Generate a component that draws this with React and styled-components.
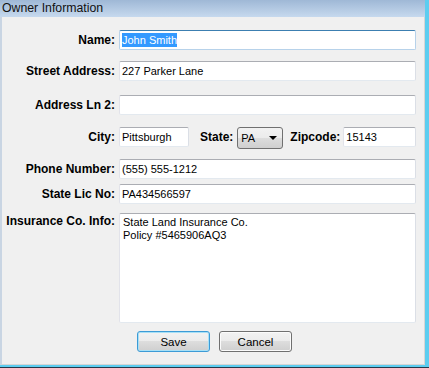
import styled, { createGlobalStyle } from "styled-components";

const GlobalStyle = createGlobalStyle`
  html, body {
    margin: 0;
    padding: 0;
    background: #ffffff;
  }
  body {
    font-family: "Liberation Sans", Arial, sans-serif;
  }
`;

const Window = styled.div`
  width: 429px;
  height: 368px;
  box-sizing: border-box;
  border-bottom: 1px solid #26394a;
  display: flex;
  flex-direction: column;
`;

const Frame = styled.div`
  flex: 1;
  min-height: 0;
  display: flex;
  flex-direction: column;
  border-right: 4px solid #5ccdf0;
  border-bottom: 2px solid #5ccdf0;
`;

const TitleBar = styled.div`
  flex: none;
  height: 17px;
  padding-left: 2px;
  background: linear-gradient(#9fb8d6, #c6d9ee);
  font-size: 12.3px;
  line-height: 17px;
  color: #111111;
`;

const Body = styled.div`
  flex: 1;
  display: flex;
  flex-direction: column;
  background: #f0f0f0;
  border-left: 2px solid #c9d5e3;
  border-right: 1px solid #d6d6d6;
  border-bottom: 1px solid #d6d6d6;
  padding-right: 8px;
`;

const Row = styled.div`
  display: flex;
  align-items: flex-start;
  margin-top: ${(p) => p.$top}px;
`;

const Label = styled.div`
  flex: none;
  width: 117px;
  box-sizing: border-box;
  padding-right: 4px;
  text-align: right;
  font-size: 12px;
  font-weight: bold;
  line-height: ${(p) => (p.$multi ? "13px" : "20px")};
  padding-top: ${(p) => (p.$multi ? "2px" : "0")};
  color: #000000;
`;

const InlineLabel = styled.div`
  flex: none;
  margin-left: ${(p) => p.$left}px;
  margin-right: ${(p) => p.$right}px;
  font-size: 12px;
  font-weight: bold;
  line-height: 20px;
  color: #000000;
`;

const TextBox = styled.div`
  flex: ${(p) => (p.$width ? "none" : "1")};
  width: ${(p) => (p.$width ? `${p.$width}px` : "auto")};
  height: ${(p) => p.$height || 20}px;
  box-sizing: border-box;
  background: #ffffff;
  border: 1px solid;
  border-color: ${(p) =>
    p.$focus
      ? "#3c7fb1 #b7d2ea #b7d2ea #b7d2ea"
      : "#abadb3 #dbdfe6 #e3e9ef #e2e3ea"};
  border-radius: 2px;
  padding: ${(p) => (p.$multi ? "2px 3px" : "0 2px")};
  font-size: 11px;
  line-height: ${(p) => (p.$multi ? "13px" : "18px")};
  color: #000000;
  white-space: pre;
`;

const Selected = styled.span`
  background: #3399ff;
  color: #ffffff;
  padding: 1px 0;
`;

const Select = styled.div`
  flex: none;
  width: 46px;
  height: 22px;
  box-sizing: border-box;
  display: flex;
  align-items: center;
  padding-left: 3px;
  border: 1px solid #707070;
  border-radius: 3px;
  background: linear-gradient(#f2f2f2 0%, #ebebeb 50%, #dddddd 50%, #cfcfcf 100%);
  font-size: 11px;
  color: #000000;
`;

const Arrow = styled.span`
  width: 0;
  height: 0;
  margin-left: auto;
  margin-right: 5px;
  border-left: 4px solid transparent;
  border-right: 4px solid transparent;
  border-top: 4px solid #000000;
`;

const Buttons = styled.div`
  display: flex;
  gap: 9px;
  margin-top: 8px;
  padding-left: 135px;
`;

const Button = styled.div`
  width: 73px;
  height: 21px;
  box-sizing: border-box;
  display: flex;
  align-items: center;
  justify-content: center;
  border: 1px solid ${(p) => (p.$default ? "#3c9bd6" : "#707070")};
  border-radius: 3px;
  box-shadow: ${(p) => (p.$default ? "inset 0 0 0 1px #a8e0f6" : "inset 0 0 0 1px #fbfbfb")};
  background: linear-gradient(#f2f2f2 0%, #ebebeb 50%, #dddddd 50%, #cfcfcf 100%);
  font-size: 11.5px;
  color: #000000;
`;

export default function App() {
  return (
    <>
      <GlobalStyle />
      <Window>
        <Frame>
          <TitleBar>Owner Information</TitleBar>
          <Body>
            <Row $top={13}>
              <Label>Name:</Label>
              <TextBox $focus>
                <Selected>John Smith</Selected>
              </TextBox>
            </Row>
            <Row $top={11}>
              <Label>Street Address:</Label>
              <TextBox>227 Parker Lane</TextBox>
            </Row>
            <Row $top={14}>
              <Label>Address Ln 2:</Label>
              <TextBox />
            </Row>
            <Row $top={12}>
              <Label>City:</Label>
              <TextBox $width={70}>Pittsburgh</TextBox>
              <InlineLabel $left={11} $right={4}>State:</InlineLabel>
              <Select>
                PA
                <Arrow />
              </Select>
              <InlineLabel $left={7} $right={3}>Zipcode:</InlineLabel>
              <TextBox>15143</TextBox>
            </Row>
            <Row $top={10}>
              <Label>Phone Number:</Label>
              <TextBox>(555) 555-1212</TextBox>
            </Row>
            <Row $top={5}>
              <Label>State Lic No:</Label>
              <TextBox>PA434566597</TextBox>
            </Row>
            <Row $top={9}>
              <Label $multi>Insurance Co. Info:</Label>
              <TextBox $multi $height={110}>
                {"State Land Insurance Co.\nPolicy #5465906AQ3"}
              </TextBox>
            </Row>
            <Buttons>
              <Button $default>Save</Button>
              <Button>Cancel</Button>
            </Buttons>
          </Body>
        </Frame>
      </Window>
    </>
  );
}
